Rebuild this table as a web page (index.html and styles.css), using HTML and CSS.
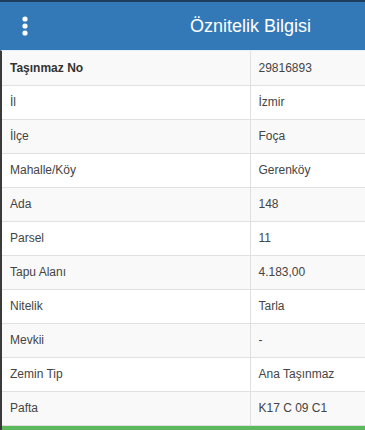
FILE: index.html
```html
<!DOCTYPE html>
<html lang="tr">
<head>
<meta charset="utf-8">
<link rel="stylesheet" href="styles.css">
</head>
<body>
<div class="panel">
  <header class="header">
    <span class="menu" aria-label="menu">
      <svg width="8" height="22" viewBox="0 0 8 22"><circle cx="4" cy="4" r="2.6" fill="#fff"/><circle cx="4" cy="11" r="2.6" fill="#fff"/><circle cx="4" cy="18" r="2.6" fill="#fff"/></svg>
    </span>
    <h1 class="title">Öznitelik Bilgisi</h1>
  </header>
  <div class="body">
    <table class="attr">
      <tbody>
        <tr><td class="key bold">Taşınmaz No</td><td>29816893</td></tr>
        <tr><td class="key">İl</td><td>İzmir</td></tr>
        <tr><td class="key">İlçe</td><td>Foça</td></tr>
        <tr><td class="key">Mahalle/Köy</td><td>Gerenköy</td></tr>
        <tr><td class="key">Ada</td><td>148</td></tr>
        <tr><td class="key">Parsel</td><td>11</td></tr>
        <tr><td class="key">Tapu Alanı</td><td>4.183,00</td></tr>
        <tr><td class="key">Nitelik</td><td>Tarla</td></tr>
        <tr><td class="key">Mevkii</td><td>-</td></tr>
        <tr><td class="key">Zemin Tip</td><td>Ana Taşınmaz</td></tr>
        <tr><td class="key">Pafta</td><td>K17 C 09 C1</td></tr>
      </tbody>
    </table>
    <div class="footer-bar"></div>
  </div>
</div>
</body>
</html>
```
FILE: styles.css
```css
html, body {
  margin: 0;
  padding: 0;
  background: #fff;
}
body {
  font-family: "Liberation Sans", Arial, sans-serif;
  width: 365px;
  height: 430px;
  overflow: hidden;
}
.panel {
  display: flex;
  flex-direction: column;
}
.header {
  height: 48px;
  border-top: 2px solid #1e3c5e;
  background: #3479b7;
  display: flex;
  align-items: center;
  box-sizing: content-box;
}
.menu {
  display: flex;
  margin-left: 21px;
}
.title {
  margin: 0 0 0 161px;
  font-size: 18px;
  font-weight: normal;
  color: #fff;
}
.body {
  border-left: 2px solid #3a3a3a;
  border-top: 1px solid #e4f1fb;
}
.attr {
  width: 100%;
  border-collapse: collapse;
  font-size: 12px;
  color: #444;
}
.attr td {
  height: 34px;
  padding: 0 8px;
  border-bottom: 1px solid #e0e0e0;
  vertical-align: middle;
  box-sizing: border-box;
}
.attr td.key {
  width: 248px;
  border-right: 1px solid #e0e0e0;
}
.attr td.bold {
  font-weight: bold;
  color: #333;
}
.attr tr:nth-child(odd) td {
  background: #f9f9f9;
}
.footer-bar {
  height: 6px;
  background: #5cb85c;
}
```
